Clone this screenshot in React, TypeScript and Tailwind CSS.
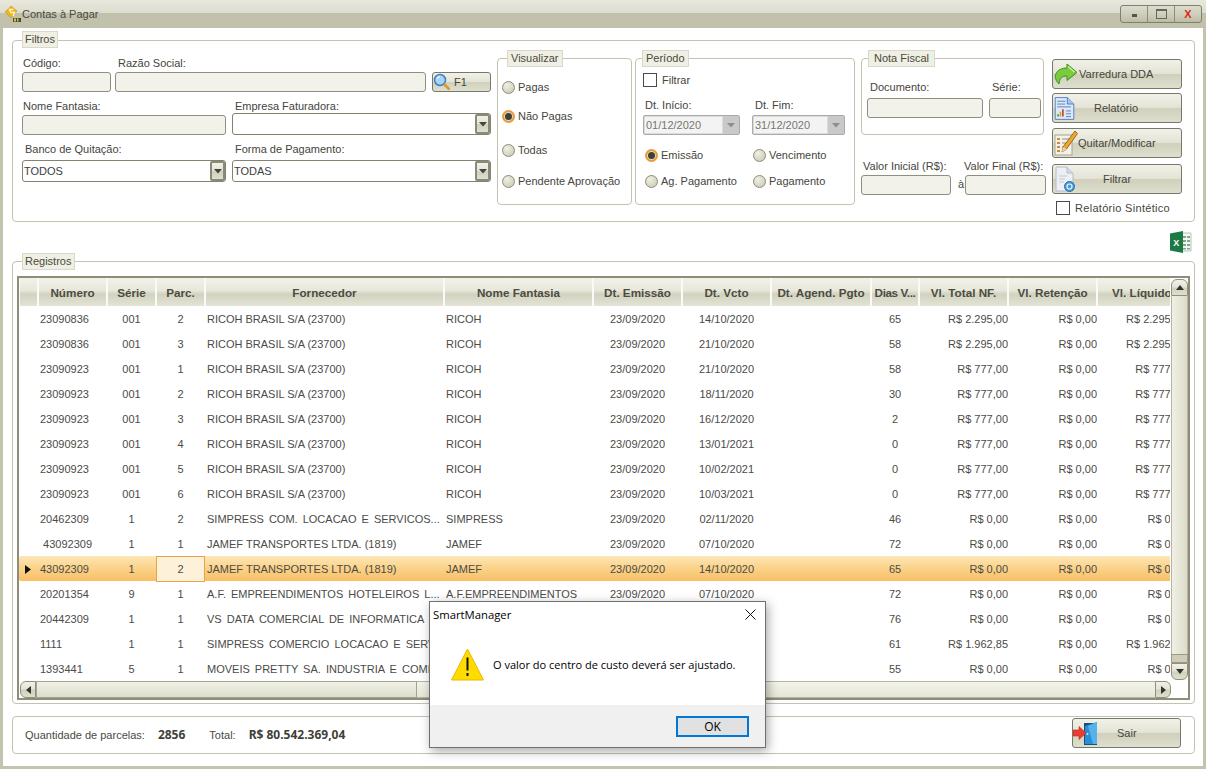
import React from 'react';

const btnBg = 'bg-[linear-gradient(180deg,#f1f1e8_0%,#e3e3d6_48%,#d0d0bc_52%,#dfdfcf_100%)]';
const cols = 'grid grid-cols-[19px_69px_49px_49px_239px_149px_89px_89px_100px_48px_89px_89px_89px] w-[1167px]';

type Row = { num: string; serie: string; parc: string; forn: string; nome: string; emis: string; vcto: string; dias: string; total: string; liq: string; sel?: boolean; wide?: boolean };

const ricoh = (num: string, serie: string, parc: string, vcto: string, dias: string, total: string): Row => ({
  num, serie, parc, forn: 'RICOH BRASIL S/A (23700)', nome: 'RICOH', emis: '23/09/2020', vcto, dias, total, liq: total,
});

const rows: Row[] = [
  ricoh('23090836', '001', '2', '14/10/2020', '65', 'R$ 2.295,00'),
  ricoh('23090836', '001', '3', '21/10/2020', '58', 'R$ 2.295,00'),
  ricoh('23090923', '001', '1', '21/10/2020', '58', 'R$ 777,00'),
  ricoh('23090923', '001', '2', '18/11/2020', '30', 'R$ 777,00'),
  ricoh('23090923', '001', '3', '16/12/2020', '2', 'R$ 777,00'),
  ricoh('23090923', '001', '4', '13/01/2021', '0', 'R$ 777,00'),
  ricoh('23090923', '001', '5', '10/02/2021', '0', 'R$ 777,00'),
  ricoh('23090923', '001', '6', '10/03/2021', '0', 'R$ 777,00'),
  { num: '20462309', serie: '1', parc: '2', forn: 'SIMPRESS COM. LOCACAO E SERVICOS...', nome: 'SIMPRESS', emis: '23/09/2020', vcto: '02/11/2020', dias: '46', total: 'R$ 0,00', liq: 'R$ 0,00', wide: true },
  { num: '\u00a043092309', serie: '1', parc: '1', forn: 'JAMEF TRANSPORTES LTDA. (1819)', nome: 'JAMEF', emis: '23/09/2020', vcto: '07/10/2020', dias: '72', total: 'R$ 0,00', liq: 'R$ 0,00' },
  { num: '43092309', serie: '1', parc: '2', forn: 'JAMEF TRANSPORTES LTDA. (1819)', nome: 'JAMEF', emis: '23/09/2020', vcto: '14/10/2020', dias: '65', total: 'R$ 0,00', liq: 'R$ 0,00', sel: true },
  { num: '20201354', serie: '9', parc: '1', forn: 'A.F. EMPREENDIMENTOS HOTELEIROS L...', nome: 'A.F.EMPREENDIMENTOS', emis: '23/09/2020', vcto: '07/10/2020', dias: '72', total: 'R$ 0,00', liq: 'R$ 0,00', wide: true },
  { num: '20442309', serie: '1', parc: '1', forn: 'VS DATA COMERCIAL DE INFORMATICA', nome: '', emis: '', vcto: '', dias: '76', total: 'R$ 0,00', liq: 'R$ 0,00', wide: true },
  { num: '1111', serie: '1', parc: '1', forn: 'SIMPRESS COMERCIO LOCACAO E SERV', nome: '', emis: '', vcto: '', dias: '61', total: 'R$ 1.962,85', liq: 'R$ 1.962,85', wide: true },
  { num: '1393441', serie: '5', parc: '1', forn: 'MOVEIS PRETTY SA. INDUSTRIA E COME', nome: '', emis: '', vcto: '', dias: '55', total: 'R$ 0,00', liq: 'R$ 0,00', wide: true },
];

const headers = ['', 'Número', 'Série', 'Parc.', 'Fornecedor', 'Nome Fantasia', 'Dt. Emissão', 'Dt. Vcto', 'Dt. Agend. Pgto', 'Dias V...', 'Vl. Total NF.', 'Vl. Retenção', 'Vl. Líquido'];

const Legend = ({ text, className }: { text: string; className: string }) => (
  <span className={`absolute h-[17px] bg-[#efefe4] border border-[#d9d9c9] leading-[15px] text-[#4a4a40] ${className}`}>{text}</span>
);

const Label = ({ text, className = '' }: { text: string; className?: string }) => (
  <div className={`h-[14px] leading-[14px] whitespace-nowrap text-[#45453c] ${className}`}>{text}</div>
);

const Input = ({ className }: { className: string }) => (
  <div className={`h-[20px] rounded-[3px] border border-[#8f8f7e] bg-[#f2f1ea] ${className}`} />
);

const Combo = ({ value, className }: { value?: string; className: string }) => (
  <div className={`h-[22px] flex items-stretch rounded-[3px] border border-[#83836f] bg-white ${className}`}>
    <span className="flex-1 pl-[1px] leading-[20px] text-[#3e3e3e]">{value}</span>
    <span className={`w-[15px] flex items-center justify-center border-2 border-[#8a8a78] rounded-[2px] ${btnBg}`}>
      <svg width="8" height="5" viewBox="0 0 8 5"><path d="M0 0h8L4 4.5z" fill="#44443a" /></svg>
    </span>
  </div>
);

const Radio = ({ on, text, className = '' }: { on?: boolean; text: string; className?: string }) => (
  <div className={`h-[14px] flex items-center gap-[3px] whitespace-nowrap text-[#45453c] ${className}`}>
    {on ? (
      <span className="w-[13px] h-[13px] rounded-full border-2 border-[#e99a3a] bg-[#d9d9c8] flex items-center justify-center">
        <span className="w-[7px] h-[7px] rounded-full bg-[#3f3f36]" />
      </span>
    ) : (
      <span className="w-[13px] h-[13px] rounded-full border border-[#8c8c78] bg-[radial-gradient(circle_at_35%_30%,#f0f0e4,#c6c6ae)]" />
    )}
    <span>{text}</span>
  </div>
);

const Check = ({ text, className = '' }: { text: string; className?: string }) => (
  <div className={`h-[14px] flex items-center gap-[5px] whitespace-nowrap text-[#45453c] ${className}`}>
    <span className="w-[14px] h-[14px] border border-[#4a4a4a] bg-white" />
    <span>{text}</span>
  </div>
);

const DateBox = ({ value, className }: { value: string; className: string }) => (
  <div className={`h-[20px] flex items-stretch rounded-[2px] border border-[#a9a9a9] bg-[#dcdcdc] ${className}`}>
    <span className="flex-1 m-[1px] pl-[1px] bg-[#f3f3f3] leading-[16px] text-[#77776f]">{value}</span>
    <span className="w-[16px] flex items-center justify-center bg-[#c9c9c9]">
      <svg width="8" height="5" viewBox="0 0 8 5"><path d="M0 0h8L4 4.5z" fill="#8d8d8d" /></svg>
    </span>
  </div>
);

const ArrowIcon = () => (
  <svg width="24" height="24" viewBox="0 0 24 24" className="shrink-0">
    <path d="M13 2l10 8.500-10 8v-4.500c-5 0-7.500 2-8 8-3-3-4.500-6.500-3-10.500 1.500-3.500 6-5.500 11-5.500z" fill="#7ccb3c" stroke="#3f8f24" strokeWidth="1" strokeLinejoin="round" />
    <path d="M14 4.500l6.500 5.500" stroke="#c9f09c" strokeWidth="1.500" fill="none" />
  </svg>
);

const ReportIcon = () => (
  <svg width="21" height="25" viewBox="0 0 26 30" className="shrink-0">
    <path d="M1.500 1.500h15l8 8v19h-23z" fill="#dbe8f8" stroke="#3d6fb5" />
    <path d="M16.500 1.500v8h8" fill="#a9c6ec" stroke="#3d6fb5" />
    <path d="M4 6h10M4 9.500h10M4 13h17" stroke="#3d6fb5" />
    <path d="M5 25v-3" stroke="#2f9e3f" strokeWidth="2" />
    <path d="M8 25v-6" stroke="#e0a020" strokeWidth="2" />
    <path d="M11 25v-9" stroke="#d03a2a" strokeWidth="2" />
    <path d="M15 18h6M15 21.500h6M15 25h6" stroke="#3d6fb5" />
  </svg>
);

const PencilIcon = () => (
  <svg width="24" height="26" viewBox="0 0 24 26" className="shrink-0">
    <rect x="1" y="5" width="17" height="20" fill="#f4f1e6" stroke="#a5a594" />
    <path d="M3 9h3M3 13h3M3 17h3M3 21h3" stroke="#d08a3a" strokeWidth="2" />
    <path d="M8 9h8M8 13h6M8 17h4" stroke="#8f8f80" />
    <path d="M21 1l2.500 2.500-11 15.500-4.500 3 1-5z" fill="#f0a82c" stroke="#7f5316" strokeWidth="0.800" />
    <path d="M8 22l1-5 3.500 2z" fill="#f3d9ac" />
  </svg>
);

const FilterIcon = () => (
  <svg width="24" height="28" viewBox="0 0 24 28" className="shrink-0">
    <path d="M2 2h11l6 6v18H2z" fill="#eceff3" stroke="#b6bcc5" />
    <path d="M13 2v6h6" fill="#d6dbe2" stroke="#b6bcc5" />
    <path d="M5 11h8M5 14h6M5 17h5" stroke="#c4c9d0" />
    <circle cx="15.500" cy="21.500" r="5" fill="#4a9bd8" stroke="#2b6fa8" />
    <circle cx="15.500" cy="21.500" r="2.500" fill="none" stroke="#e8f4fc" strokeWidth="1.200" />
  </svg>
);

const DoorIcon = () => (
  <svg width="26" height="26" viewBox="0 0 26 26" className="shrink-0">
    <path d="M11 3h13v22H11z" fill="#15507f" />
    <path d="M12 6l12-4v22l-12 0z" fill="#2c8fd6" />
    <path d="M15 6l9-4v22h-4z" fill="#55b2ea" />
    <circle cx="14.500" cy="14" r="1" fill="#d8eefb" />
    <path d="M0 10h6V6.500l7 6.500-7 6.500V16H0z" fill="#ee3b30" stroke="#c3241c" strokeWidth="0.600" />
  </svg>
);

const Btn = ({ icon, text, textClass }: { icon: React.ReactNode; text: string; textClass: string }) => (
  <div className={`w-[130px] h-[30px] flex items-center rounded-[3px] border border-[#77776a] pl-[1px] whitespace-nowrap text-[#45453c] ${btnBg}`}>
    {icon}
    <span className={textClass}>{text}</span>
  </div>
);

const ScrollBtn = ({ dir, className }: { dir: 'up' | 'down' | 'left' | 'right'; className: string }) => {
  const d = { up: 'M0 5h8L4 0z', down: 'M0 0h8L4 5z', left: 'M5 0v8L0 4z', right: 'M0 0v8l5-4z' }[dir];
  const box = dir === 'up' || dir === 'down' ? { w: 8, h: 5 } : { w: 5, h: 8 };
  return (
    <span className={`flex items-center justify-center border border-[#8f8f7c] ${btnBg} ${className}`}>
      <svg width={box.w} height={box.h} viewBox={`0 0 ${box.w} ${box.h}`}><path d={d} fill="#33332c" /></svg>
    </span>
  );
};

const Cell = ({ text, className = '' }: { text: string; className?: string }) => (
  <div className={`whitespace-nowrap overflow-hidden leading-[26px] ${className}`}>{text}</div>
);

const GridRow = ({ r }: { r: Row }) => (
  <div className={`${cols} h-[25px] text-[#4b4b48] ${r.sel ? 'bg-[linear-gradient(180deg,#fde7b8_0%,#fbd48c_45%,#f8bf66_100%)] rounded-[2px]' : 'bg-white'}`}>
    <div className="flex items-center pl-[6px]">
      {r.sel && <svg width="6" height="9" viewBox="0 0 6 9"><path d="M0 0l6 4.500L0 9z" fill="#111" /></svg>}
    </div>
    <Cell text={r.num} className="pl-[2px]" />
    <Cell text={r.serie} className="text-center" />
    {r.sel ? (
      <div className="leading-[24px] text-center bg-[#fdf1da] border border-[#e6a348]">{r.parc}</div>
    ) : (
      <Cell text={r.parc} className="text-center" />
    )}
    <Cell text={r.forn} className={r.wide ? 'pl-[2px] [word-spacing:2px]' : 'pl-[2px]'} />
    <Cell text={r.nome} className="pl-[2px]" />
    <Cell text={r.emis} className="text-center" />
    <Cell text={r.vcto} className="text-center" />
    <Cell text="" />
    <Cell text={r.dias} className="text-center" />
    <Cell text={r.total} className="text-right" />
    <Cell text="R$ 0,00" className="text-right" />
    <Cell text={r.liq} className="text-right" />
  </div>
);

export default function App() {
  return (
    <div className="w-[1206px] h-[769px] overflow-hidden relative flex flex-col bg-[#c4c4ae] font-['Liberation_Sans',sans-serif] text-[11px] leading-[14px]">
      {/* title bar */}
      <div className="h-[28px] shrink-0 flex items-center pl-[5px] pr-[4px] bg-[linear-gradient(180deg,#e8e8dd_0%,#dcdccf_46%,#c2c2ac_47%,#c2c2ac_100%)]">
        <svg width="16" height="16" viewBox="0 0 16 16" className="shrink-0">
          <path d="M6 0l6 5-6 7-6-6z" fill="#efb51e" stroke="#c58a0e" strokeWidth="0.500" />
          <path d="M8.500 3.500H4.500L6 6.500h3.500L8 10" fill="none" stroke="#fff4c8" strokeWidth="1.500" />
          <path d="M8 12h8v4H8z" fill="#4a4a2a" />
          <path d="M9 12.500h2v3H9zM12 12.500h1.500v3H12z" fill="#d8c24a" />
        </svg>
        <span className="ml-[1px] text-[#4a4a3e]">Contas à Pagar</span>
        <div className="ml-auto flex h-[18px] w-[82px] rounded-[3px] border border-[#80806e] overflow-hidden bg-[linear-gradient(180deg,#dcdccf_0%,#cfcfbd_50%,#bcbca6_100%)]">
          <span className="flex-1 flex items-center justify-center border-r border-[#8d8d7c]"><span className="w-[5px] h-[3px] mt-[3px] bg-[#55554a]" /></span>
          <span className="flex-1 flex items-center justify-center border-r border-[#8d8d7c]"><span className="w-[11px] h-[10px] border border-[#66665a] border-t-2" /></span>
          <span className="flex-1 flex items-center justify-center text-[#d8281c] font-bold text-[11px] leading-none">X</span>
        </div>
      </div>

      {/* body */}
      <div className="flex-1 mx-[3px] mb-[3px] bg-white pl-[9px] pr-[8px] pt-[12px] flex flex-col">
        {/* Filtros */}
        <div className="relative h-[182px] shrink-0 rounded-[4px] border border-[#c3c3b2] pl-[9px] pt-[15px] flex">
          <Legend text="Filtros" className="left-[9px] -top-[10px] pl-[2px] pr-[2px]" />
          <div className="w-[469px] shrink-0">
            <div className="flex">
              <div className="w-[89px]">
                <Label text="Código:" className="pl-[1px] mb-[2px]" />
                <Input className="w-[89px]" />
              </div>
              <div className="w-[311px] ml-[4px]">
                <Label text="Razão Social:" className="pl-[3px] mb-[2px]" />
                <Input className="w-[311px]" />
              </div>
              <div className={`w-[59px] h-[20px] mt-[16px] ml-[6px] flex items-center rounded-[3px] border border-[#77776a] ${btnBg}`}>
                <svg width="18" height="18" viewBox="0 0 18 18" className="shrink-0">
                  <circle cx="7" cy="7" r="5.500" fill="#a9d4f5" stroke="#3f7fc0" strokeWidth="1.500" />
                  <path d="M4 5.500a3.500 3.500 0 0 1 3-2" stroke="#fff" strokeWidth="1.200" fill="none" />
                  <path d="M11 11l5.500 5.500" stroke="#d89a2c" strokeWidth="2.500" />
                </svg>
                <span className="ml-[3px] text-[#45453c]">F1</span>
              </div>
            </div>
            <div className="flex mt-[7px] items-end">
              <div className="w-[204px]">
                <Label text="Nome Fantasia:" className="pl-[1px] mb-[2px]" />
                <Input className="w-[204px]" />
              </div>
              <div className="w-[259px] ml-[6px]">
                <Label text="Empresa Faturadora:" className="pl-[3px]" />
                <Combo className="w-[259px]" />
              </div>
            </div>
            <div className="flex mt-[7px]">
              <div className="w-[204px]">
                <Label text="Banco de Quitação:" className="pl-[3px] mb-[4px]" />
                <Combo value="TODOS" className="w-[204px]" />
              </div>
              <div className="w-[259px] ml-[6px]">
                <Label text="Forma de Pagamento:" className="pl-[3px] mb-[4px]" />
                <Combo value="TODAS" className="w-[259px]" />
              </div>
            </div>
          </div>

          {/* Visualizar */}
          <div className="relative w-[135px] h-[147px] mt-[2px] ml-[6px] shrink-0 rounded-[4px] border border-[#c3c3b2] pl-[4px] pt-[21px]">
            <Legend text="Visualizar" className="left-[9px] -top-[9px] px-[3px]" />
            <Radio text="Pagas" />
            <Radio on text="Não Pagas" className="mt-[15px]" />
            <Radio text="Todas" className="mt-[20px]" />
            <Radio text="Pendente Aprovação" className="mt-[17px]" />
          </div>

          {/* Período */}
          <div className="relative w-[220px] h-[147px] mt-[2px] ml-[3px] shrink-0 rounded-[4px] border border-[#c3c3b2] pl-[7px] pt-[14px]">
            <Legend text="Período" className="left-[6px] -top-[9px] px-[3px]" />
            <Check text="Filtrar" />
            <div className="flex mt-[11px]">
              <div className="w-[109px]">
                <Label text="Dt. Início:" className="pl-[2px] mb-[3px]" />
                <DateBox value="01/12/2020" className="w-[97px]" />
              </div>
              <div>
                <Label text="Dt. Fim:" className="pl-[3px] mb-[3px]" />
                <DateBox value="31/12/2020" className="w-[93px]" />
              </div>
            </div>
            <div className="flex mt-[13px] pl-[2px]">
              <Radio on text="Emissão" className="w-[108px]" />
              <Radio text="Vencimento" />
            </div>
            <div className="flex mt-[12px] pl-[2px]">
              <Radio text="Ag. Pagamento" className="w-[108px]" />
              <Radio text="Pagamento" />
            </div>
          </div>

          {/* Nota fiscal + valores */}
          <div className="w-[186px] ml-[6px] mt-[2px] shrink-0">
            <div className="relative w-[183px] h-[77px] rounded-[4px] border border-[#c3c3b2] pl-[5px] pt-[21px]">
              <Legend text="Nota Fiscal" className="left-[6px] -top-[9px] px-[5px]" />
              <div className="flex">
                <div className="w-[122px]">
                  <Label text="Documento:" className="pl-[3px] mb-[4px]" />
                  <Input className="w-[116px]" />
                </div>
                <div>
                  <Label text="Série:" className="pl-[3px] mb-[4px]" />
                  <Input className="w-[52px]" />
                </div>
              </div>
            </div>
            <div className="flex mt-[24px]">
              <div className="w-[103px]">
                <Label text="Valor Inicial (R$):" className="pl-[2px] mb-[2px]" />
                <Input className="w-[90px]" />
              </div>
              <div className="relative w-[83px]">
                <Label text="Valor Final (R$):" className="mb-[2px]" />
                <Input className="w-[81px] ml-[1px]" />
                <span className="absolute -left-[6px] top-[18px] text-[#45453c]">à</span>
              </div>
            </div>
          </div>

          {/* botoes */}
          <div className="ml-[5px] mt-[3px] flex flex-col">
            <Btn icon={<ArrowIcon />} text="Varredura DDA" textClass="ml-[1px]" />
            <div className="mt-[4px]"><Btn icon={<ReportIcon />} text="Relatório" textClass="ml-[19px]" /></div>
            <div className="mt-[5px]"><Btn icon={<PencilIcon />} text="Quitar/Modificar" textClass="ml-[0px]" /></div>
            <div className="mt-[6px]"><Btn icon={<FilterIcon />} text="Filtrar" textClass="ml-[25px]" /></div>
            <Check text="Relatório Sintético" className="mt-[7px] ml-[4px] tracking-[0.3px]" />
          </div>
        </div>

        {/* excel */}
        <div className="h-[39px] shrink-0 flex justify-end items-center pr-[3px]">
          <svg width="22" height="22" viewBox="0 0 22 22">
            <path d="M11 2h10v18H11z" fill="#f3f7f3" stroke="#b5c7b8" />
            <path d="M13 5h3v2h-3zM17 5h3v2h-3zM13 9h3v2h-3zM17 9h3v2h-3zM13 13h3v2h-3zM17 13h3v2h-3zM13 17h3v1.500h-3zM17 17h3v1.500h-3z" fill="#7fa98d" />
            <path d="M0 2.500L13 0v22L0 19.500z" fill="#1d7a45" />
            <text x="6.300" y="14.500" textAnchor="middle" fontSize="9" fontWeight="700" fill="#fff" fontFamily="Liberation Sans">X</text>
          </svg>
        </div>

        {/* Registros */}
        <div className="relative h-[443px] shrink-0 rounded-[4px] border border-[#c3c3b2] pl-[4px] pr-[4px] pt-[14px]">
          <Legend text="Registros" className="left-[9px] -top-[9px] pl-[2px] pr-[3px]" />
          <div className="h-[424px] border-2 border-[#8d8d7a] flex flex-col bg-white">
            <div className="h-[403px] flex">
              <div className="w-[1152px] overflow-hidden">
                <div className={`${cols} h-[28px] font-bold text-[11.7px] text-[#4c4c40]`}>
                  {headers.map((h, i) => (
                    <div key={i} className={`border-r border-l border-r-[#fbfbf5] border-l-[#fbfbf5] overflow-hidden whitespace-nowrap leading-[30px] bg-[linear-gradient(180deg,#f3f3ea_0%,#e6e6da_45%,#d2d2c0_58%,#e4e4d6_100%)] ${i === 12 ? 'pl-[14px] text-left' : 'text-center'} ${i === 9 ? 'tracking-[-0.4px]' : ''}`}>{h}</div>
                  ))}
                </div>
                {rows.map((r, i) => <GridRow key={i} r={r} />)}
              </div>
              <div className="w-[17px] flex flex-col pt-[1px] ml-[1px]">
                <ScrollBtn dir="up" className="h-[17px] rounded-t-[6px]" />
                <span className="h-[358px] border-x border-[#b5b5a2] bg-[linear-gradient(90deg,#f0f0e5,#dcdccb)]" />
                <span className="h-[9px] border border-[#9a9a86] bg-[#cdcdb9]" />
                <ScrollBtn dir="down" className="h-[17px] rounded-b-[6px]" />
              </div>
            </div>
            <div className="h-[17px] flex pl-[1px]">
              <ScrollBtn dir="left" className="w-[16px] rounded-l-[6px]" />
              <span className="w-[381px] border border-[#a3a38f] bg-[linear-gradient(180deg,#f0f0e6,#dedecb)]" />
              <span className="w-[738px] border-y border-[#b5b5a2] bg-[linear-gradient(180deg,#f3f3ea,#e6e6d8)]" />
              <ScrollBtn dir="right" className="w-[16px] rounded-r-[6px]" />
            </div>
          </div>
        </div>

        {/* rodape */}
        <div className="h-[38px] mt-[12px] shrink-0 rounded-[4px] border border-[#c3c3b2] pl-[12px] flex items-center">
          <span className="text-[#4a4a42]">Quantidade de parcelas:</span>
          <span className="ml-[13px] font-bold text-[12px] font-['Noto_Sans',sans-serif] text-[#3f3f38]">2856</span>
          <span className="ml-[24px] text-[#4a4a42]">Total:</span>
          <span className="ml-[13px] font-bold text-[12px] font-['Noto_Sans',sans-serif] text-[#3f3f38]">R$ 80.542.369,04</span>
          <div className={`ml-auto mr-[13px] mb-[4px] w-[109px] h-[30px] flex items-center rounded-[3px] border border-[#77776a] ${btnBg}`}>
            <DoorIcon />
            <span className="ml-[18px] text-[#45453c]">Sair</span>
          </div>
        </div>
      </div>

      {/* message box */}
      <div className="absolute left-[429px] top-[601px] w-[337px] h-[147px] flex flex-col bg-white border border-[#6f6f6f] shadow-[2px_3px_10px_rgba(0,0,0,0.35)] font-['Open_Sans',sans-serif] text-black">
        <div className="h-[24px] flex items-center pl-[3px] pr-[9px] pt-[1px]">
          <span className="text-[11.3px]">SmartManager</span>
          <svg width="11" height="11" viewBox="0 0 11 11" className="ml-auto"><path d="M.5.500l10 10M10.500.500l-10 10" stroke="#111" /></svg>
        </div>
        <div className="h-[79px] flex items-center pl-[21px] pb-[2px]">
          <svg width="33" height="33" viewBox="0 0 33 33" className="shrink-0">
            <path d="M16.500 1L32.500 32H.500z" fill="#ffdb00" stroke="#e8b800" strokeLinejoin="round" />
            <path d="M15.500 9.500h2v13h-2zM15.500 25h2v3h-2z" fill="#111" />
          </svg>
          <span className="ml-[9px] text-[11px] whitespace-nowrap">O valor do centro de custo deverá ser ajustado.</span>
        </div>
        <div className="flex-1 bg-[#f0f0f0] flex justify-end items-start pt-[11px] pr-[16px]">
          <div className="w-[73px] h-[21px] border-2 border-[#0078d7] bg-[#e1e1e1] flex items-center justify-center text-[12px]">OK</div>
        </div>
      </div>
    </div>
  );
}
